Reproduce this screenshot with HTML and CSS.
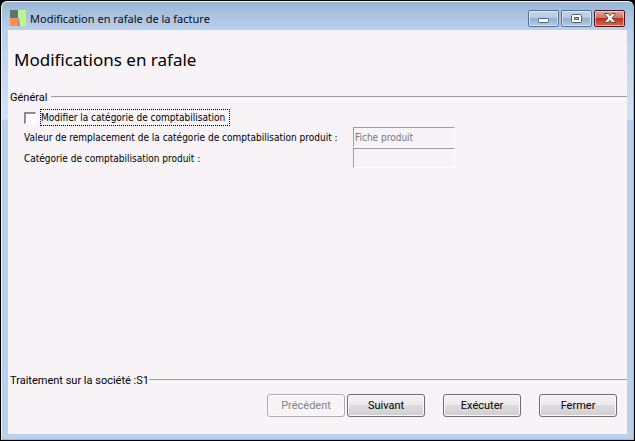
FILE: index.html
```
<!DOCTYPE html>
<html lang="fr">
<head>
    <meta charset="UTF-8">
    <meta name="viewport" content="width=device-width, initial-scale=1.0">
    <title>Modification en rafale de la facture</title>
    <link rel="stylesheet" href="styles.css">
</head>
<body>
    <div class="window">
        <header class="title-bar">
            <svg class="app-icon" width="16" height="16" viewBox="0 0 16 16" aria-hidden="true">
                <rect width="8" height="8" fill="#66706c"/>
                <rect y="8" width="8" height="8" fill="#ff8c52"/>
                <rect x="8" width="8" height="16" fill="#bdf58c"/>
                <path d="M8 8h1l1 8H8z" fill="#8a9494"/>
            </svg>
            <span class="window-title">Modification en rafale de la facture</span>
            <div class="window-controls">
                <button type="button" class="window-btn minimize" aria-label="Réduire">
                    <svg width="11" height="5" viewBox="0 0 11 5">
                        <rect x="0.5" y="0.5" width="10" height="4" rx="1" fill="#fff" stroke="#565e6c"/>
                    </svg>
                </button>
                <button type="button" class="window-btn" aria-label="Agrandir">
                    <svg width="11" height="9" viewBox="0 0 11 9">
                        <rect x="0.5" y="0.5" width="10" height="8" rx="1" fill="#fff" stroke="#565e6c"/>
                        <rect x="3.5" y="3.5" width="4" height="2" fill="#a9c3e0" stroke="#565e6c"/>
                    </svg>
                </button>
                <button type="button" class="window-btn close" aria-label="Fermer la fenêtre">
                    <svg width="12" height="10" viewBox="0 0 12 10">
                        <path d="M1 .5h3L6 2.700 8 .5h3v1L8 5l3 3.500v1H8L6 7.300 4 9.500H1v-1L4 5 1 1.500z" fill="#fff" stroke="#5e4850"/>
                    </svg>
                </button>
            </div>
        </header>

        <main class="content">
            <h1>Modifications en rafale</h1>

            <section class="general">
                <h2 class="section-title">Général</h2>
                <div class="form">
                    <div class="check-row">
                        <input type="checkbox" id="modifier">
                        <label class="focused" for="modifier">Modifier la catégorie de comptabilisation</label>
                    </div>
                    <div class="field-row">
                        <label for="valeur">Valeur de remplacement de la catégorie de comptabilisation produit :</label>
                        <input type="text" id="valeur" value="Fiche produit" disabled>
                    </div>
                    <div class="field-row">
                        <label for="categorie">Catégorie de comptabilisation produit :</label>
                        <input type="text" id="categorie" disabled>
                    </div>
                </div>
            </section>

            <footer>
                <div class="section-title status">Traitement sur la société :S1</div>
                <div class="actions">
                    <div class="nav-buttons">
                        <button type="button" class="btn" disabled>Précédent</button>
                        <button type="button" class="btn">Suivant</button>
                    </div>
                    <button type="button" class="btn">Exécuter</button>
                    <button type="button" class="btn">Fermer</button>
                </div>
            </footer>
        </main>
    </div>
</body>
</html>
```

FILE: styles.css
```
* {
    box-sizing: border-box;
}

body {
    margin: 0;
    background: #000;
    color: #000;
    font-family: Roboto, Arial, sans-serif;
    font-size: 11px;
}

.window {
    display: flex;
    flex-direction: column;
    min-height: calc(100vh - 2px);
    margin: 1px;
    padding: 0 6px 5px;
    border: 1px solid #5fd3ee;
    border-top-color: #f4f8fc;
    border-left-color: #e8f2fb;
    border-radius: 6px 6px 0 0;
    background: linear-gradient(#9ab6d6 0, #bad1ec 28px, #d3e2f5 117px, #bad1ee 118px);
}

.title-bar {
    display: flex;
    align-items: center;
    height: 28px;
    padding: 4px 2px 0;
}

.app-icon {
    margin-right: 4px;
}

.window-title {
    flex: 1;
    font-family: "Noto Sans", sans-serif;
    font-size: 11px;
    color: #0a0a20;
}

.window-controls {
    display: flex;
    gap: 2px;
}

.window-btn {
    display: flex;
    align-items: center;
    justify-content: center;
    width: 31px;
    height: 17px;
    padding: 0;
    border: 1px solid #5b708c;
    border-radius: 2px;
    background: linear-gradient(#c2d6ec 0, #b1c9e4 50%, #94b1d2 50%, #b0cbe8 100%);
    box-shadow: inset 0 0 0 1px rgba(255, 255, 255, 0.5);
}

.window-btn.minimize {
    padding-top: 4px;
}

.window-btn.close {
    border-color: #4a1520;
    background: linear-gradient(#e3a296 0, #d2705e 50%, #ba3322 50%, #d46a4c 100%);
}

.content {
    display: flex;
    flex: 1;
    flex-direction: column;
    background: #f7f3f7;
}

h1 {
    margin: 0;
    padding: 18px 6px;
    font-family: "Noto Sans", sans-serif;
    font-size: 17px;
    font-weight: 400;
    line-height: 24px;
}

.section-title {
    display: flex;
    align-items: center;
    gap: 4px;
    margin: 0;
    padding-left: 2px;
    font-size: 11px;
    font-weight: 400;
    line-height: 16px;
}

.section-title::after {
    content: "";
    flex: 1;
    height: 2px;
    border-top: 1px solid #a09ca2;
    border-bottom: 1px solid #fff;
}

.form {
    padding: 3px 16px;
    font-family: "DejaVu Sans Condensed", "Liberation Sans", sans-serif;
    font-size: 10px;
}

.check-row {
    display: flex;
    align-items: center;
    gap: 4px;
}

.check-row input {
    appearance: none;
    width: 12px;
    height: 12px;
    margin: 0;
    border: 1px solid #fff;
    border-top: 2px solid #8e8a8e;
    border-left: 2px solid #8e8a8e;
    background: #fff;
}

.check-row input:checked {
    background: #404040;
}

.focused {
    padding-right: 4px;
    border: 1px dotted #000;
    line-height: 15px;
}

.field-row {
    display: grid;
    grid-template-columns: 329px 102px;
    align-items: center;
    margin-top: 1px;
    white-space: nowrap;
}

.field-row input {
    width: 100%;
    height: 20px;
    padding: 0 1px;
    border: 1px solid #fff;
    border-top-color: #a09ca2;
    border-left-color: #a09ca2;
    background: transparent;
    color: #777;
    font: inherit;
}

footer {
    margin-top: auto;
}

.status {
    gap: 0;
}

.actions {
    display: flex;
    justify-content: flex-end;
    gap: 18px;
    padding: 5px 10px 17px;
}

.nav-buttons {
    display: flex;
    gap: 2px;
}

.btn {
    width: 78px;
    height: 23px;
    padding: 0;
    border: 1px solid #706c72;
    border-radius: 3px;
    background: linear-gradient(#f4f2f4 0, #ebe9eb 50%, #dddbdd 50%, #d0ced0 100%);
    box-shadow: inset 0 0 0 1px #fafafa;
    color: #000;
    font-family: Roboto, sans-serif;
    font-size: 11px;
}

.btn:disabled {
    border-color: #b0adb1;
    background: #f6f4f6;
    color: #858385;
}
```
